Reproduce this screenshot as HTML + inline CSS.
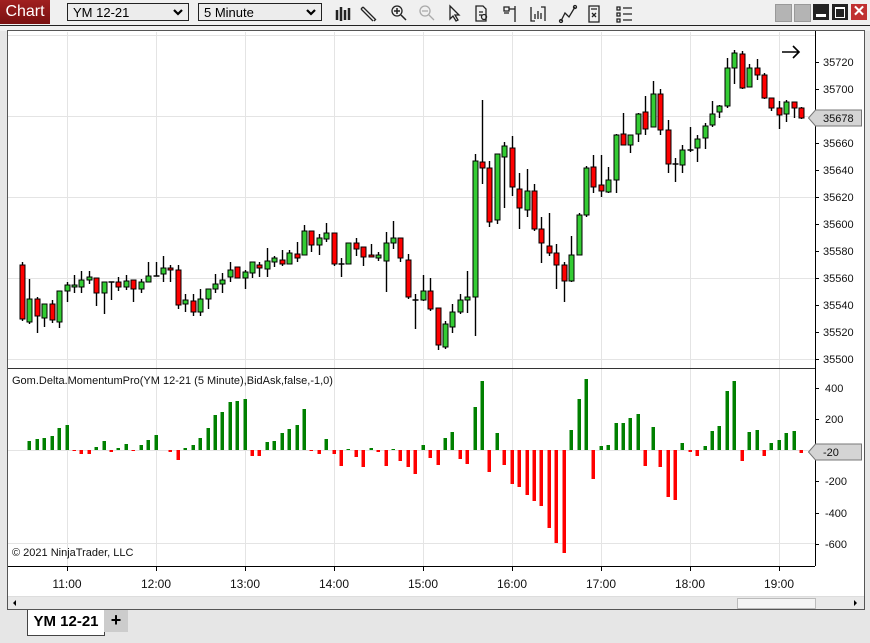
<!DOCTYPE html>
<html><head><meta charset="utf-8"><style>
body{margin:0;width:870px;height:643px;overflow:hidden;background:#e6e6e6;font-family:"Liberation Sans",sans-serif;position:relative}
.a{position:absolute}
</style></head><body>
<div class="a" style="left:0;top:0;width:870px;height:25px;background:#f0f0f0;border-bottom:1px solid #222"></div>
<div class="a" style="left:0;top:0;width:50px;height:24px;background:linear-gradient(#a02020,#7a1010);color:#fff;font-size:16px;line-height:24px;text-align:center">Chart</div>
<div class="a" style="left:67px;top:3px;width:122px;height:18px;border:1px solid #222;background:#ececec;font-size:13px;line-height:18px;padding-left:5px;box-sizing:border-box">YM 12-21<svg class="a" style="right:5px;top:5px" width="10" height="8"><path d="M1 1l4 4 4-4" stroke="#000" stroke-width="2.2" fill="none"/></svg></div>
<div class="a" style="left:198px;top:3px;width:124px;height:18px;border:1px solid #222;background:#ececec;font-size:13px;line-height:18px;padding-left:5px;box-sizing:border-box">5 Minute<svg class="a" style="right:5px;top:5px" width="10" height="8"><path d="M1 1l4 4 4-4" stroke="#000" stroke-width="2.2" fill="none"/></svg></div>
<svg class="a" style="left:330px;top:2px" width="310" height="22" fill="none" stroke="#222" stroke-width="1.3">
<path d="M7 8v10M11 5v14M15 8v10M19 6v12" stroke-width="2.5"/>
<path d="M33 5l12 12M31 7l12 12M33 5l-2 2M44 19l2-2"/>
<circle cx="67" cy="9" r="5"/><path d="M71 13l5 5M64 9h6M67 6v6" stroke-width="1.5"/>
<circle cx="95" cy="9" r="5" stroke="#aaa"/><path d="M99 13l5 5M92 9h6" stroke="#aaa"/>
<path d="M120 4v13l3-3 3 5 2-1-3-5h4z"/>
<path d="M146 4h7l3 3v12h-10zM149 10h4M149 13h3" /><circle cx="154" cy="15" r="2.5"/>
<path d="M174 5h5v4h-5zM174 11h5M179 7h6v12M185 4v16"/>
<path d="M201 5v14h4M211 5h4v14M205 12v5M208 9v8M211 11v6"/>
<path d="M231 19l4-8 4 4 6-10"/><circle cx="231" cy="19" r="1.5"/><circle cx="245" cy="5" r="1.5"/>
<path d="M259 4h10v16h-10zM261 7h6M262 11l4 4M266 11l-4 4"/>
<path d="M287 5h3v3h-3zM287 11h3v3h-3zM287 17h3v3h-3zM293 6h9M293 12h9M293 18h9"/>
</svg>
<div class="a" style="left:775px;top:4px;width:15px;height:16px;background:#b4b4b4;border:1px solid #999"></div>
<div class="a" style="left:794px;top:4px;width:15px;height:16px;background:#b4b4b4;border:1px solid #999"></div>
<div class="a" style="left:813px;top:4px;width:16px;height:16px;background:#222"><div class="a" style="left:3px;top:10px;width:10px;height:3px;background:#fff"></div></div>
<div class="a" style="left:832px;top:4px;width:16px;height:16px;background:#222"><div class="a" style="left:3px;top:3px;width:8px;height:8px;border:1px solid #fff;border-top-width:2px"></div></div>
<div class="a" style="left:851px;top:4px;width:16px;height:16px;background:#c03030;color:#fff;font-weight:bold;font-size:15px;line-height:16px;text-align:center">&#10005;</div>
<div class="a" style="left:0;top:26px;width:870px;height:5px;background:#f0f0f0"></div>
<svg id="c" class="a" style="left:0;top:0" width="870" height="643"></svg>
<div class="a" style="left:27px;top:610px;width:76px;height:25px;background:#fff;border:1px solid #444;border-top:none;font-family:'Liberation Sans Narrow','Liberation Sans',sans-serif;font-size:15px;font-weight:bold;line-height:24px;text-align:center">YM 12-21</div>
<div class="a" style="left:104px;top:610px;width:24px;height:22px;background:#ccc;font-size:18px;font-weight:bold;line-height:21px;text-align:center">+</div>
<script>
var s='';
function R(x,y,w,h,f,st){s+='<rect x="'+x+'" y="'+y+'" width="'+w+'" height="'+h+'" fill="'+f+'"'+(st?' stroke="'+st+'"':'')+'/>';}
function L(x1,y1,x2,y2,c,w){s+='<line x1="'+x1+'" y1="'+y1+'" x2="'+x2+'" y2="'+y2+'" stroke="'+c+'" stroke-width="'+(w||1)+'"/>';}
function T(x,y,t,a,sz,ff){s+='<text x="'+x+'" y="'+y+'" font-size="'+(sz||11)+'" text-anchor="'+(a||'start')+'" font-family="'+(ff||'Liberation Sans, sans-serif')+'" fill="#111">'+t+'</text>';}
R(8,31,856,566,'#fff');
R(8,597,856,12,'#e8e8e8');
var gx=[67,156,245,334,423,512,601,690,779];
gx.forEach(function(x){L(x+.5,32,x+.5,566,'#e4e4e4');});
[35,116,197,278,359].forEach(function(y){L(8,y+.5,815,y+.5,'#e4e4e4');});
[450,543].forEach(function(y){L(8,y+.5,815,y+.5,'#e4e4e4');});
var C=[[265,319,262,321],[322,299,279,324],[299,316,297,333],[318,304,304,327],[304,320,300,323],[322,291,291,328],[291,285,282,302],[287,285,275,293],[287,280,271,293],[280,277,271,284],[278,293,278,306],[293,282,282,314],[282,282,282,300],[282,287,277,291],[287,281,275,290],[280,289,280,302],[289,282,279,293],[282,276,262,282],[276,276,262,276],[274,268,256,282],[268,270,265,282],[270,305,265,309],[304,300,294,312],[301,312,294,316],[312,299,289,316],[299,289,289,309],[289,284,274,293],[284,280,273,293],[277,270,262,282],[267,278,267,278],[278,272,270,289],[273,262,262,278],[265,268,262,277],[269,261,248,277],[262,258,256,267],[260,264,250,266],[264,253,250,264],[254,258,242,262],[255,231,225,255],[231,245,231,252],[245,238,234,255],[239,233,223,242],[233,264,233,266],[264,264,258,277],[264,243,243,264],[243,249,238,256],[247,257,247,266],[255,257,244,257],[258,255,252,261],[261,243,232,292],[243,238,221,249],[238,258,238,262],[260,297,254,299],[300,300,294,329],[300,291,275,301],[291,309,278,311],[308,345,308,350],[347,324,321,349],[327,312,304,333],[312,300,294,314],[300,297,271,313],[297,161,154,336],[162,168,100,184],[168,222,161,227],[220,154,154,224],[157,146,142,208],[148,187,136,196],[189,208,173,229],[210,191,169,217],[191,229,184,231],[229,243,217,263],[246,253,213,256],[253,265,244,289],[265,281,262,302],[281,255,236,282],[255,215,213,255],[215,168,166,217],[167,187,155,193],[185,191,155,197],[192,180,167,193],[180,135,134,193],[134,145,113,145],[145,135,135,153],[134,114,113,142],[112,129,96,135],[127,94,81,127],[94,130,89,135],[130,164,120,173],[164,164,158,182],[165,150,145,173],[150,150,127,152],[148,139,135,162],[138,126,123,149],[125,114,101,127],[112,106,105,118],[106,68,58,108],[68,53,50,84],[54,88,51,89],[87,68,64,87],[68,75,59,80],[75,98,73,99],[98,108,98,111],[108,115,101,129],[114,102,100,122],[102,108,102,118],[108,118,107,119]];
C.forEach(function(c,i){var x=Math.round(22+i*7.42)+.5;var g=c[1]<c[0];L(x,c[2],x,c[3],'#000',1.4);
var t=Math.min(c[0],c[1]),h=Math.abs(c[0]-c[1]);if(h<1){L(x-3,t,x+3,t,'#000',1.5);}else R(x-2.5,t,5,h,g?'#33cc33':'#ff0000','#000');});
var I=[451,441,439,438,436,428,425,-451,-454,-454,447,441,-452,448,444,-451,445,440,435,450,-452,-460,448,445,438,428,415,412,402,401,399,-456,-456,442,441,433,429,425,409,-451,-454,439,-454,-466,449,-457,-467,448,-452,-466,449,-461,-467,-474,445,-458,-465,438,432,-459,-464,407,381,-472,433,-465,-484,-487,-495,-501,-506,-528,-543,-553,430,399,379,-479,446,445,423,423,418,414,-466,427,-467,-497,-500,443,-452,-456,446,431,426,391,381,-461,432,430,-456,443,440,433,431,-453];
I.forEach(function(v,i){var x=Math.round(22+i*7.42)-1.5;if(v>0){if(v<450)R(x,v,3.5,450-v,'#008000');}else{v=-v;R(x,450,3.5,v-450,'#ff0000');}});
L(8,368.5,815,368.5,'#333');
L(815.5,31,815.5,566,'#000');
L(8,566.5,815,566.5,'#000');
L(8,596.5,864,596.5,'#ddd');
R(7.5,30.5,857,579,'none','#555');
[[35720,62],[35700,89],[35660,143],[35640,170],[35620,197],[35600,224],[35580,251],[35560,278],[35540,305],[35520,332],[35500,359]].forEach(function(p){L(815,p[1]+.5,819,p[1]+.5,'#000');T(823,p[1]+4,p[0]);});
L(815,116.5,819,116.5,'#000');
s+='<path d="M808.5 118l7-8h46v16h-46z" fill="#d4d4d4" stroke="#777"/>';T(823,122,'35678');
[[400,388],[200,419],[-200,481],[-400,513],[-600,544]].forEach(function(p){L(815,p[1]+.5,819,p[1]+.5,'#000');T(825,p[1]+4,p[0]);});
s+='<path d="M808.5 452l7-8h46v16h-46z" fill="#d4d4d4" stroke="#777"/>';T(823,456,'-20');
s+='<path d="M782 52h17M793 46l6 6-6 6" stroke="#000" stroke-width="1.6" fill="none"/>';
T(12,384,'Gom.Delta.MomentumPro(YM 12-21 (5 Minute),BidAsk,false,-1,0)');
T(12,556,'© 2021 NinjaTrader, LLC');
gx.forEach(function(x,i){L(x+.5,566,x+.5,571,'#000');T(x,588,(11+i)+':00','middle',12,'Liberation Sans Narrow, Liberation Sans, sans-serif');});
R(737.5,598.5,78,10,'#f4f4f4','#bbb');
s+='<path d="M16 600l-3 3 3 3z M854 600l3 3-3 3z" fill="#000"/>';
document.getElementById('c').innerHTML=s;
</script>
</body></html>
